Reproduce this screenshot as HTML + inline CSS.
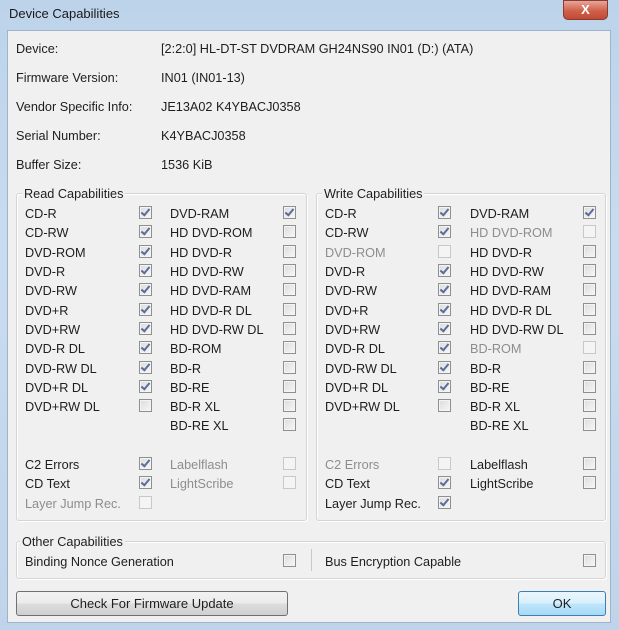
<!DOCTYPE html>
<html><head><meta charset="utf-8"><style>
*{margin:0;padding:0;box-sizing:border-box}
body{width:619px;height:630px;overflow:hidden;background:linear-gradient(180deg,#bcd3ea 0%,#c9dcef 40%,#bfd4ea 100%);font-family:"Liberation Sans",sans-serif;font-size:12.7px;color:#1e1e1e;position:relative}
.t{position:absolute;left:9px;top:6px;font-size:13px;color:#1a1a1a}
.close{position:absolute;left:563px;top:0;width:45px;height:20px;border-radius:0 0 5px 5px;background:linear-gradient(#e6a699,#d0604a 55%,#c04a33);border:1px solid #8a3a30;color:#fff;font-weight:bold;text-align:center;font-size:13px;line-height:18px}
.client{position:absolute;left:7px;top:30px;width:604px;height:593px;background:#f0f0f0;border:1px solid #9fb4cc}
.a{position:absolute;white-space:nowrap;line-height:16px;margin-top:1px}
.g{color:#8d8d8d}
.grp{position:absolute;border:1px solid #d5d5d5;border-radius:3px;box-shadow:inset 1px 1px 0 #fff,1px 1px 0 #fff}
.gl{position:absolute;background:#f0f0f0;padding:0 2px;line-height:14px;margin-top:1px}
.cb{position:absolute;width:13px;height:13px;border:1px solid #8e8f8f;background:linear-gradient(135deg,#dcdcdc,#f7f7f7);box-shadow:inset 0 0 0 1px #f4f4f4}
.cb.d{border-color:#c8c8c8;background:#f4f4f4}
.cb.c::after{content:"";position:absolute;left:3px;top:0px;width:3px;height:7px;border:solid #5a6c9a;border-width:0 2px 2px 0;transform:rotate(40deg)}
.btn{position:absolute;border:1px solid #707070;border-radius:3px;background:linear-gradient(#f2f2f2 0%,#ebebeb 50%,#dddddd 51%,#cfcfcf 100%);text-align:center;font-size:13px;line-height:23px}
</style></head><body>
<div class="t">Device Capabilities</div>
<div class="close">X</div>
<div class="client"></div>

<div class="a" style="left:16px;top:40px">Device:</div><div class="a" style="left:161px;top:40px">[2:2:0] HL-DT-ST DVDRAM GH24NS90 IN01 (D:) (ATA)</div>
<div class="a" style="left:16px;top:69px">Firmware Version:</div><div class="a" style="left:161px;top:69px">IN01 (IN01-13)</div>
<div class="a" style="left:16px;top:98px">Vendor Specific Info:</div><div class="a" style="left:161px;top:98px">JE13A02 K4YBACJ0358</div>
<div class="a" style="left:16px;top:127px">Serial Number:</div><div class="a" style="left:161px;top:127px">K4YBACJ0358</div>
<div class="a" style="left:16px;top:156px">Buffer Size:</div><div class="a" style="left:161px;top:156px">1536 KiB</div>

<div class="grp" style="left:16px;top:193px;width:291px;height:328px"></div><div class="gl" style="left:22px;top:186px">Read Capabilities</div>
<div class="grp" style="left:316px;top:193px;width:290px;height:328px"></div><div class="gl" style="left:322px;top:186px">Write Capabilities</div>

<div class="a" style="left:25px;top:205px">CD-R</div><div class="cb c" style="left:139px;top:206px"></div>
<div class="a" style="left:25px;top:224px">CD-RW</div><div class="cb c" style="left:139px;top:225px"></div>
<div class="a" style="left:25px;top:244px">DVD-ROM</div><div class="cb c" style="left:139px;top:245px"></div>
<div class="a" style="left:25px;top:263px">DVD-R</div><div class="cb c" style="left:139px;top:264px"></div>
<div class="a" style="left:25px;top:282px">DVD-RW</div><div class="cb c" style="left:139px;top:283px"></div>
<div class="a" style="left:25px;top:302px">DVD+R</div><div class="cb c" style="left:139px;top:303px"></div>
<div class="a" style="left:25px;top:321px">DVD+RW</div><div class="cb c" style="left:139px;top:322px"></div>
<div class="a" style="left:25px;top:340px">DVD-R DL</div><div class="cb c" style="left:139px;top:341px"></div>
<div class="a" style="left:25px;top:360px">DVD-RW DL</div><div class="cb c" style="left:139px;top:361px"></div>
<div class="a" style="left:25px;top:379px">DVD+R DL</div><div class="cb c" style="left:139px;top:380px"></div>
<div class="a" style="left:25px;top:398px">DVD+RW DL</div><div class="cb" style="left:139px;top:399px"></div>
<div class="a" style="left:25px;top:456px">C2 Errors</div><div class="cb c" style="left:139px;top:457px"></div>
<div class="a" style="left:25px;top:475px">CD Text</div><div class="cb c" style="left:139px;top:476px"></div>
<div class="a g" style="left:25px;top:495px">Layer Jump Rec.</div><div class="cb d" style="left:139px;top:496px"></div>

<div class="a" style="left:170px;top:205px">DVD-RAM</div><div class="cb c" style="left:283px;top:206px"></div>
<div class="a" style="left:170px;top:224px">HD DVD-ROM</div><div class="cb" style="left:283px;top:225px"></div>
<div class="a" style="left:170px;top:244px">HD DVD-R</div><div class="cb" style="left:283px;top:245px"></div>
<div class="a" style="left:170px;top:263px">HD DVD-RW</div><div class="cb" style="left:283px;top:264px"></div>
<div class="a" style="left:170px;top:282px">HD DVD-RAM</div><div class="cb" style="left:283px;top:283px"></div>
<div class="a" style="left:170px;top:302px">HD DVD-R DL</div><div class="cb" style="left:283px;top:303px"></div>
<div class="a" style="left:170px;top:321px">HD DVD-RW DL</div><div class="cb" style="left:283px;top:322px"></div>
<div class="a" style="left:170px;top:340px">BD-ROM</div><div class="cb" style="left:283px;top:341px"></div>
<div class="a" style="left:170px;top:360px">BD-R</div><div class="cb" style="left:283px;top:361px"></div>
<div class="a" style="left:170px;top:379px">BD-RE</div><div class="cb" style="left:283px;top:380px"></div>
<div class="a" style="left:170px;top:398px">BD-R XL</div><div class="cb" style="left:283px;top:399px"></div>
<div class="a" style="left:170px;top:417px">BD-RE XL</div><div class="cb" style="left:283px;top:418px"></div>
<div class="a g" style="left:170px;top:456px">Labelflash</div><div class="cb d" style="left:283px;top:457px"></div>
<div class="a g" style="left:170px;top:475px">LightScribe</div><div class="cb d" style="left:283px;top:476px"></div>

<div class="a" style="left:325px;top:205px">CD-R</div><div class="cb c" style="left:438px;top:206px"></div>
<div class="a" style="left:325px;top:224px">CD-RW</div><div class="cb c" style="left:438px;top:225px"></div>
<div class="a g" style="left:325px;top:244px">DVD-ROM</div><div class="cb d" style="left:438px;top:245px"></div>
<div class="a" style="left:325px;top:263px">DVD-R</div><div class="cb c" style="left:438px;top:264px"></div>
<div class="a" style="left:325px;top:282px">DVD-RW</div><div class="cb c" style="left:438px;top:283px"></div>
<div class="a" style="left:325px;top:302px">DVD+R</div><div class="cb c" style="left:438px;top:303px"></div>
<div class="a" style="left:325px;top:321px">DVD+RW</div><div class="cb c" style="left:438px;top:322px"></div>
<div class="a" style="left:325px;top:340px">DVD-R DL</div><div class="cb c" style="left:438px;top:341px"></div>
<div class="a" style="left:325px;top:360px">DVD-RW DL</div><div class="cb c" style="left:438px;top:361px"></div>
<div class="a" style="left:325px;top:379px">DVD+R DL</div><div class="cb c" style="left:438px;top:380px"></div>
<div class="a" style="left:325px;top:398px">DVD+RW DL</div><div class="cb" style="left:438px;top:399px"></div>
<div class="a g" style="left:325px;top:456px">C2 Errors</div><div class="cb d" style="left:438px;top:457px"></div>
<div class="a" style="left:325px;top:475px">CD Text</div><div class="cb c" style="left:438px;top:476px"></div>
<div class="a" style="left:325px;top:495px">Layer Jump Rec.</div><div class="cb c" style="left:438px;top:496px"></div>

<div class="a" style="left:470px;top:205px">DVD-RAM</div><div class="cb c" style="left:583px;top:206px"></div>
<div class="a g" style="left:470px;top:224px">HD DVD-ROM</div><div class="cb d" style="left:583px;top:225px"></div>
<div class="a" style="left:470px;top:244px">HD DVD-R</div><div class="cb" style="left:583px;top:245px"></div>
<div class="a" style="left:470px;top:263px">HD DVD-RW</div><div class="cb" style="left:583px;top:264px"></div>
<div class="a" style="left:470px;top:282px">HD DVD-RAM</div><div class="cb" style="left:583px;top:283px"></div>
<div class="a" style="left:470px;top:302px">HD DVD-R DL</div><div class="cb" style="left:583px;top:303px"></div>
<div class="a" style="left:470px;top:321px">HD DVD-RW DL</div><div class="cb" style="left:583px;top:322px"></div>
<div class="a g" style="left:470px;top:340px">BD-ROM</div><div class="cb d" style="left:583px;top:341px"></div>
<div class="a" style="left:470px;top:360px">BD-R</div><div class="cb" style="left:583px;top:361px"></div>
<div class="a" style="left:470px;top:379px">BD-RE</div><div class="cb" style="left:583px;top:380px"></div>
<div class="a" style="left:470px;top:398px">BD-R XL</div><div class="cb" style="left:583px;top:399px"></div>
<div class="a" style="left:470px;top:417px">BD-RE XL</div><div class="cb" style="left:583px;top:418px"></div>
<div class="a" style="left:470px;top:456px">Labelflash</div><div class="cb" style="left:583px;top:457px"></div>
<div class="a" style="left:470px;top:475px">LightScribe</div><div class="cb" style="left:583px;top:476px"></div>

<div class="grp" style="left:16px;top:541px;width:590px;height:38px"></div><div class="gl" style="left:20px;top:534px">Other Capabilities</div>
<div class="a" style="left:25px;top:553px">Binding Nonce Generation</div><div class="cb" style="left:283px;top:554px"></div>
<div style="position:absolute;left:311px;top:549px;width:1px;height:22px;background:#c8c8c8"></div>
<div class="a" style="left:325px;top:553px">Bus Encryption Capable</div><div class="cb" style="left:583px;top:554px"></div>

<div class="btn" style="left:16px;top:591px;width:272px;height:25px">Check For Firmware Update</div>
<div class="btn" style="left:518px;top:591px;width:88px;height:25px;border-color:#3c7fb1;background:linear-gradient(#eaf6fd 0%,#d9f0fc 50%,#bee6fd 51%,#a7d9f5 100%)">OK</div>
</body></html>
